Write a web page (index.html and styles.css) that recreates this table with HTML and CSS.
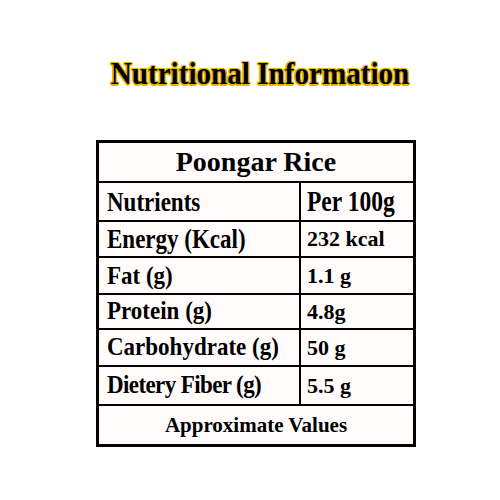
FILE: index.html
```html
<!DOCTYPE html>
<html>
<head>
<meta charset="utf-8">
<link rel="stylesheet" href="styles.css">
</head>
<body>
<div class="page">
  <div class="heading-wrap"><h1 class="heading">Nutritional Information</h1></div>
  <div class="table">
    <div class="row title-row">Poongar Rice</div>
    <div class="row cols head-row"><div class="cell left"><span class="txt tall">Nutrients</span></div><div class="cell right big"><span class="txt tall">Per 100g</span></div></div>
    <div class="row cols r-energy"><div class="cell left"><span class="txt tall">Energy (Kcal)</span></div><div class="cell right">232 kcal</div></div>
    <div class="row cols r-fat"><div class="cell left"><span class="txt mid">Fat (g)</span></div><div class="cell right">1.1 g</div></div>
    <div class="row cols r-protein"><div class="cell left"><span class="txt low">Protein (g)</span></div><div class="cell right">4.8g</div></div>
    <div class="row cols r-carb"><div class="cell left"><span class="txt low">Carbohydrate (g)</span></div><div class="cell right">50 g</div></div>
    <div class="row cols r-fiber"><div class="cell left narrow"><span class="txt low">Dietery Fiber (g)</span></div><div class="cell right">5.5 g</div></div>
    <div class="row foot-row">Approximate Values</div>
  </div>
</div>
</body>
</html>
```
FILE: styles.css
```css
html, body {
  margin: 0;
  padding: 0;
  background: #ffffff;
}
body {
  width: 500px;
  height: 500px;
  font-family: "Liberation Serif", "Times New Roman", serif;
  color: #000;
}
.page {
  padding-top: 55px;
}
.heading-wrap {
  display: flex;
  justify-content: center;
  padding-left: 20px;
  height: 40px;
}
.heading {
  margin: 0;
  font-size: 32px;
  font-weight: bold;
  line-height: 36px;
  transform: scaleX(0.91);
  color: #000;
  text-shadow:
    1.5px 0 0 #e9b400, -1.5px 0 0 #e9b400, 0 1.5px 0 #e9b400, 0 -1.5px 0 #e9b400,
    1px 1px 0 #e9b400, -1px -1px 0 #e9b400, 1px -1px 0 #e9b400, -1px 1px 0 #e9b400,
    0 0 3px #f5cf40;
}
.table {
  margin: 45px 0 0 96px;
  width: 314px;
  border: 3px solid #000;
  background: #fffbfb;
  font-weight: bold;
}
.row {
  border-top: 2px solid #000;
}
.row:first-child {
  border-top: none;
}
.cols {
  display: grid;
  grid-template-columns: 202px 1fr;
}
.cell {
  display: flex;
  align-items: center;
}
.txt {
  display: inline-block;
  transform-origin: left center;
}
.txt.tall { transform: scaleY(1.22); }
.txt.mid { transform: scaleY(1.12); }
.txt.low { transform: scaleY(1.06); }
.left {
  padding-left: 8px;
  font-size: 23px;
  border-right: 2px solid #000;
}
.left.narrow {
  letter-spacing: -0.6px;
}
.right {
  padding-left: 6px;
  font-size: 22px;
}
.right.big {
  font-size: 23.5px;
}
.title-row {
  height: 38px;
  line-height: 38px;
  font-size: 28px;
  text-align: center;
}
.head-row { height: 37px; }
.r-energy { height: 34px; }
.r-fat { height: 35px; }
.r-protein { height: 33px; }
.r-carb { height: 35px; }
.r-fiber { height: 37px; }
.foot-row {
  height: 38px;
  line-height: 38px;
  font-size: 21px;
  text-align: center;
}
```
